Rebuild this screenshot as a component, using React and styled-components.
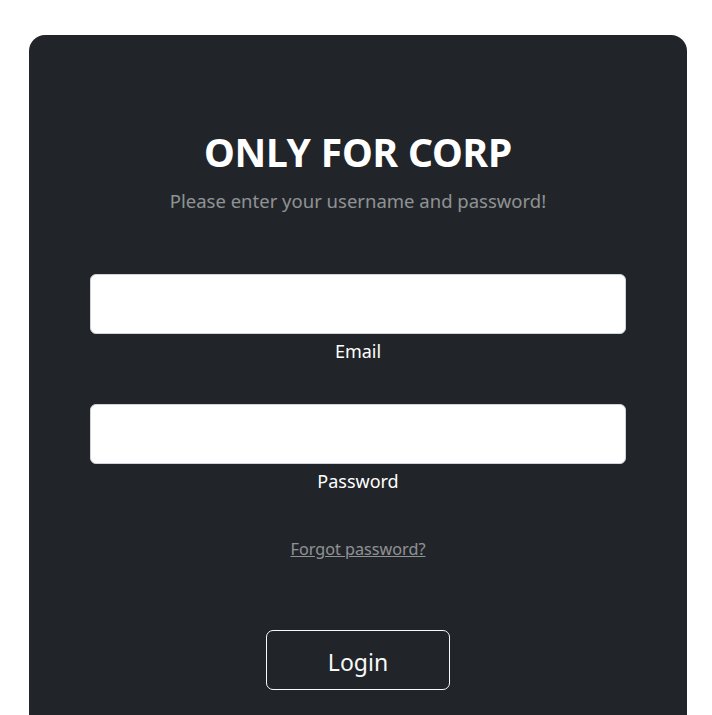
import React from "react";
import styled, { createGlobalStyle } from "styled-components";

const GlobalStyle = createGlobalStyle`
  * { box-sizing: border-box; }
  body {
    margin: 0;
    background: #ffffff;
    font-family: "Noto Sans", "Open Sans", Arial, sans-serif;
  }
`;

const Page = styled.div`
  padding: 35px 25px 0 29px;
  height: 715px;
  overflow: hidden;
`;

const Card = styled.div`
  width: 658px;
  min-height: 760px;
  background: #212529;
  border-radius: 16px;
  padding: 93px 61px 40px;
  display: flex;
  flex-direction: column;
  align-items: center;
  color: #ffffff;
`;

const Title = styled.h2`
  margin: 0;
  font-size: 39px;
  line-height: 48px;
  font-weight: 700;
  text-transform: uppercase;
  letter-spacing: -0.2px;
`;

const Subtitle = styled.p`
  margin: 13px 0 0;
  font-size: 18.5px;
  line-height: 24px;
  color: rgba(255, 255, 255, 0.5);
`;

const Field = styled.div`
  width: 100%;
  margin-top: ${(p) => p.$gap}px;
  display: flex;
  flex-direction: column;
  align-items: center;
`;

const Input = styled.input`
  width: 100%;
  height: 60px;
  border: 1px solid #ced4da;
  border-radius: 6px;
  background: #ffffff;
  font: inherit;
  padding: 0 16px;
  outline: none;
`;

const Label = styled.label`
  margin-top: 5px;
  font-size: 18px;
  line-height: 24px;
  color: #ffffff;
`;

const Forgot = styled.a`
  margin-top: 44px;
  font-size: 16.2px;
  line-height: 24px;
  color: rgba(255, 255, 255, 0.5);
  text-decoration: underline;
  cursor: pointer;
`;

const LoginButton = styled.button`
  margin-top: 69px;
  width: 184px;
  height: 60px;
  padding: 3px 0 0;
  background: transparent;
  border: 1px solid #f8f9fa;
  border-radius: 7px;
  color: #f8f9fa;
  font-family: inherit;
  font-size: 23px;
  cursor: pointer;
`;

export default function App() {
  return (
    <>
      <GlobalStyle />
      <Page>
        <Card>
          <Title>Only for Corp</Title>
          <Subtitle>Please enter your username and password!</Subtitle>
          <Field $gap={61}>
            <Input type="email" id="email" />
            <Label htmlFor="email">Email</Label>
          </Field>
          <Field $gap={41}>
            <Input type="password" id="password" />
            <Label htmlFor="password">Password</Label>
          </Field>
          <Forgot>Forgot password?</Forgot>
          <LoginButton>Login</LoginButton>
        </Card>
      </Page>
    </>
  );
}
